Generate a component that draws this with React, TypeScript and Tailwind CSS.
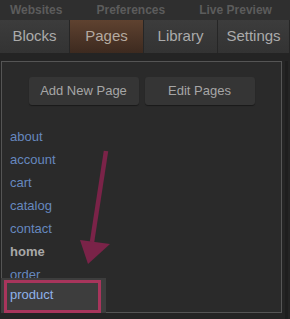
const topLinks = ["Websites", "Preferences", "Live Preview"];

const tabs = [
  { label: "Blocks", w: "w-[70px]" },
  { label: "Pages", w: "w-[74px]", active: true },
  { label: "Library", w: "w-[74px]" },
  { label: "Settings", w: "w-[72px]" },
];

const pages = ["about", "account", "cart", "catalog", "contact", "home", "order"];

export default function App() {
  return (
    <div
      className="relative w-[290px] h-[319px] overflow-hidden bg-[#2c2c2c]"
      style={{ fontFamily: '"Liberation Sans", Arial, sans-serif' }}
    >
      {/* top links */}
      <div className="flex h-[20px] items-center bg-[#2f2f2f] pl-[10px] gap-[34px] text-[12px] font-bold text-[#5c5c5c]">
        {topLinks.map((l) => (
          <span key={l}>{l}</span>
        ))}
      </div>

      {/* tabs */}
      <div className="flex h-[33px] bg-[#383838]">
        {tabs.map((t) => (
          <div
            key={t.label}
            className={`${t.w} flex items-center justify-center text-[15px] border-r border-[#262626] ${
              t.active
                ? "bg-gradient-to-b from-[#5f4230] to-[#3d2a1f] text-[#b4aaa0]"
                : "bg-gradient-to-b from-[#3c3c3c] to-[#333333] text-[#ababab]"
            }`}
          >
            {t.label}
          </div>
        ))}
      </div>

      <div className="flex h-[266px] bg-[#242424] pt-[8px]">
        {/* panel */}
        <div className="relative ml-[1px] w-[281px] h-[252px] border border-[#555] bg-[#2a2a2a]">
          <div className="flex justify-center gap-[6px] pt-[15px]">
            <button className="w-[110px] h-[28px] rounded-[3px] bg-[#353535] text-[13px] text-[#a6a6a6] shadow-[0_1px_1px_rgba(0,0,0,0.4)]">
              Add New Page
            </button>
            <button className="w-[110px] h-[28px] rounded-[3px] bg-[#353535] text-[13px] text-[#a6a6a6] shadow-[0_1px_1px_rgba(0,0,0,0.4)]">
              Edit Pages
            </button>
          </div>

          <ul className="mt-[20px] text-[13px]">
            {pages.map((p) => (
              <li
                key={p}
                className={`h-[23px] leading-[23px] pl-[8px] ${
                  p === "home" ? "font-bold text-[#a8a8a8]" : "text-[#6688bf]"
                }`}
              >
                {p}
              </li>
            ))}
            <li className="relative -ml-[1px] -mt-[8px] h-[35px] w-[105px] bg-[#3d3d3d] pl-[9px] leading-[34px] text-[#8fb2ea]">
              product
            </li>
          </ul>

          {/* annotation frame */}
          <div className="absolute left-[2px] top-[218px] w-[97px] h-[33px] border-[3px] border-[#a8355c]" />
        </div>
        <div className="ml-[3px] w-[3px] h-full bg-[#1e1e1e]" />
      </div>

      {/* annotation arrow */}
      <svg className="absolute left-0 top-0" width="290" height="319">
        <line x1="106" y1="151" x2="92" y2="242" stroke="#7a2348" strokeWidth="4.5" />
        <polygon points="80,240 110,244 88,264" fill="#7a2348" />
      </svg>
    </div>
  );
}
